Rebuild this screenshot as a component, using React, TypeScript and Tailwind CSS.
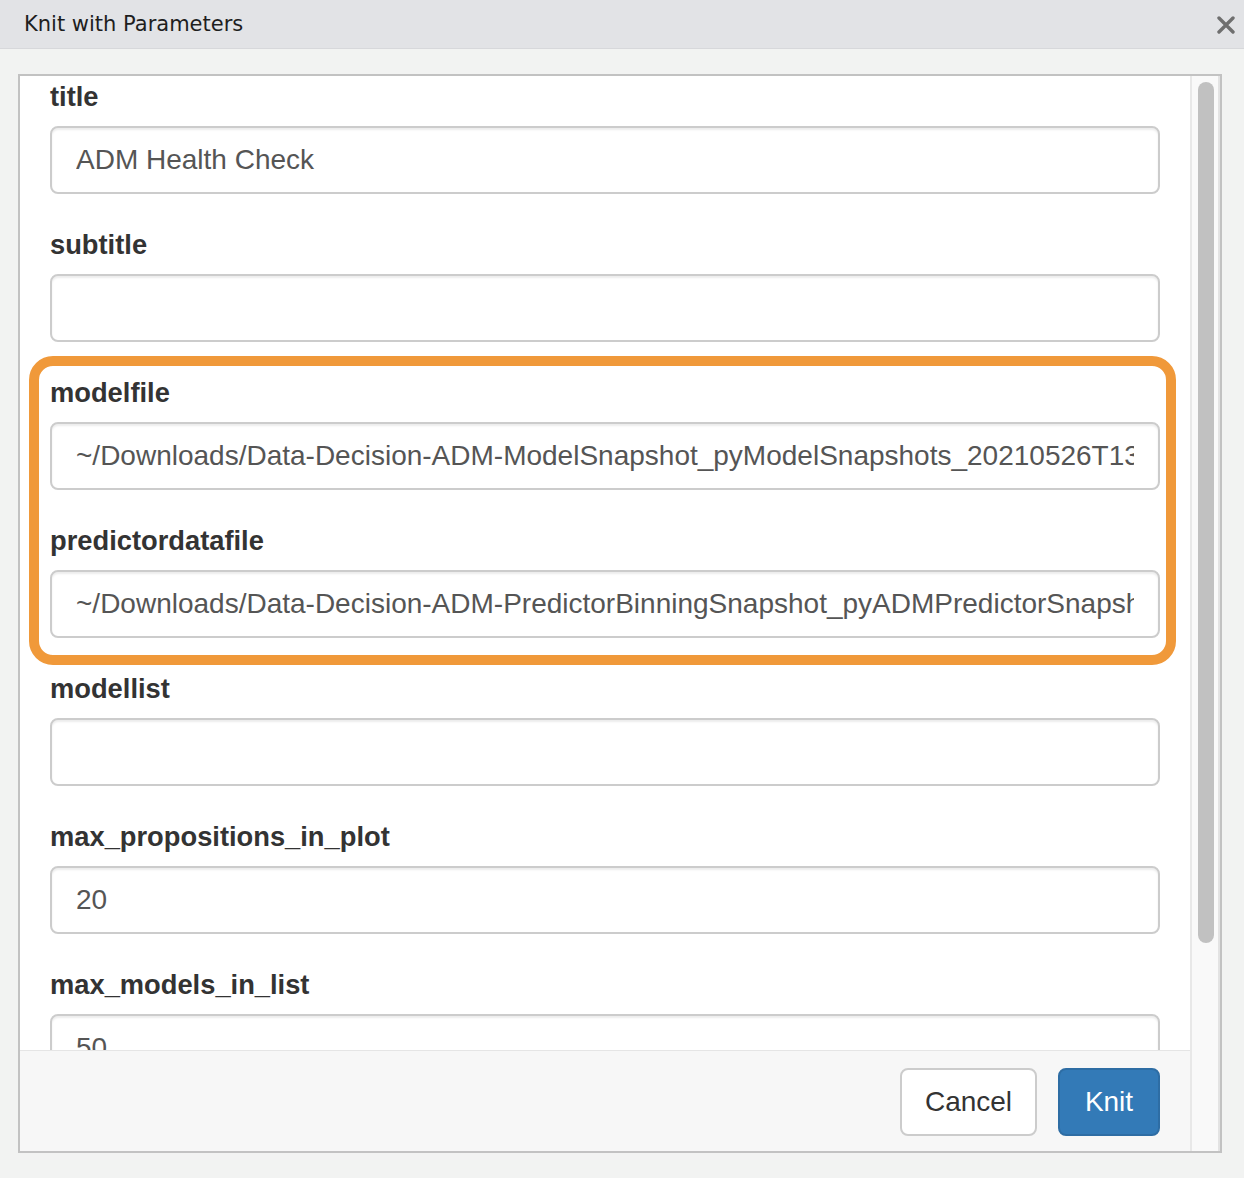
import React from 'react';

const fields = [
  { name: 'title', value: 'ADM Health Check' },
  { name: 'subtitle', value: '' },
  { name: 'modelfile', value: '~/Downloads/Data-Decision-ADM-ModelSnapshot_pyModelSnapshots_20210526T135700_GMT.zip' },
  { name: 'predictordatafile', value: '~/Downloads/Data-Decision-ADM-PredictorBinningSnapshot_pyADMPredictorSnapshots_20210526T135720_GMT.zip' },
  { name: 'modellist', value: '' },
  { name: 'max_propositions_in_plot', value: '20' },
  { name: 'max_models_in_list', value: '50' },
];

const Field: React.FC<{ name: string; value: string }> = ({ name, value }) => (
  <div className="mb-[30px]">
    <label className="block text-[27.3px] font-bold leading-[42px] text-[#333] mb-[8px]">{name}</label>
    <div className="h-[68px] bg-white border-2 border-[#ccc] rounded-[8px] px-[24px] py-[12px] shadow-[inset_0_2px_2px_rgba(0,0,0,0.075)]">
      <div className="overflow-hidden whitespace-nowrap text-[28px] leading-[40px] text-[#555]">{value}</div>
    </div>
  </div>
);

export default function App() {
  return (
    <div className="w-[1244px] h-[1178px] bg-[#f2f3f2] flex flex-col font-['Liberation_Sans',Arial,sans-serif]">
      {/* Title bar */}
      <div className="h-[49px] shrink-0 bg-[#e2e3e6] border-b border-[#d7d8db] flex items-center justify-between pl-[24px] pr-[9px] pt-[2px]">
        <span className="font-['DejaVu_Sans',sans-serif] text-[21px] text-[#1e1e1e]">Knit with Parameters</span>
        <svg width="18" height="18" viewBox="0 0 18 18">
          <path d="M2 2 L16 16 M16 2 L2 16" stroke="#6f6f6f" strokeWidth="3.4" strokeLinecap="round" />
        </svg>
      </div>

      {/* Body */}
      <div className="flex-1 pl-[18px] pr-[22px] pt-[25px]">
        <div className="h-[1079px] border-2 border-[#c2c2c2] flex">
          <div className="flex-1 flex flex-col bg-white min-w-0">
            <div className="flex-1 relative overflow-hidden px-[30px]">
              {fields.map((f) => (
                <Field key={f.name} name={f.name} value={f.value} />
              ))}
              {/* highlight annotation */}
              <div className="absolute left-[9px] top-[280px] w-[1147px] h-[309px] border-[10px] border-[#f0993a] rounded-[24px] pointer-events-none" />
            </div>
            <div className="h-[101px] shrink-0 border-t border-[#e5e5e5] bg-[#f7f7f7] flex justify-end items-start gap-[21px] pt-[17px] pr-[30px]">
              <button className="w-[137px] h-[68px] bg-white border-2 border-[#ccc] rounded-[8px] text-[28px] text-[#333]">Cancel</button>
              <button className="w-[102px] h-[68px] bg-[#337ab7] border-2 border-[#2e6da4] rounded-[8px] text-[28px] text-white">Knit</button>
            </div>
          </div>
          {/* Scrollbar */}
          <div className="w-[30px] shrink-0 bg-[#f9f9f9] border-l-2 border-r-2 border-l-[#e8e8e8] border-r-[#e3e3e3] pt-[6px] pl-[6px]">
            <div className="w-[16px] h-[861px] rounded-full bg-[#c1c1c1]" />
          </div>
        </div>
      </div>
    </div>
  );
}
